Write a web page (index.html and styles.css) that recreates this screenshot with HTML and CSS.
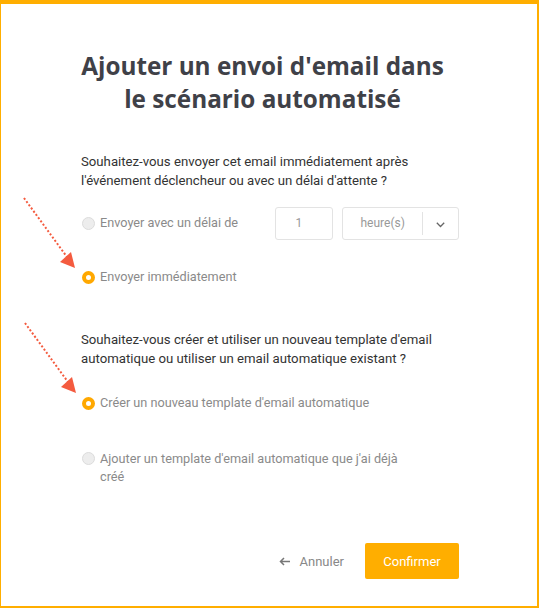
FILE: index.html
```html
<!DOCTYPE html>
<html lang="fr">
<head>
<meta charset="utf-8">
<link rel="stylesheet" href="styles.css">
</head>
<body>
<div class="frame">
  <div class="content">
    <h1 class="title">Ajouter un envoi d'email dans le scénario automatisé</h1>

    <section class="question">
      <p class="q">Souhaitez-vous envoyer cet email immédiatement après l'événement déclencheur ou avec un délai d'attente ?</p>
      <div class="option option-delay">
        <span class="radio"></span>
        <span class="label">Envoyer avec un délai de</span>
        <span class="num-input">1</span>
        <span class="select">
          <span class="select-val">heure(s)</span>
          <span class="select-btn">
            <svg width="9" height="6" viewBox="0 0 9 6"><path d="M0.8 0.8l3.7 3.7 3.7-3.7" fill="none" stroke="#666" stroke-width="1.3"/></svg>
          </span>
        </span>
      </div>
      <div class="option option-now">
        <span class="radio checked"></span>
        <span class="label">Envoyer immédiatement</span>
      </div>
    </section>

    <section class="question q2">
      <p class="q">Souhaitez-vous créer et utiliser un nouveau template d'email automatique ou utiliser un email automatique existant ?</p>
      <div class="option option-new">
        <span class="radio checked"></span>
        <span class="label">Créer un nouveau template d'email automatique</span>
      </div>
      <div class="option option-existing">
        <span class="radio"></span>
        <span class="label">Ajouter un template d'email automatique que j'ai déjà créé</span>
      </div>
    </section>

    <div class="actions">
      <span class="cancel">
        <svg class="arrow-left" width="11" height="9" viewBox="0 0 11 9"><path d="M11 4.5H1.5M5 1L1.5 4.5 5 8" fill="none" stroke="#777" stroke-width="1.5"/></svg>
        Annuler
      </span>
      <span class="confirm">Confirmer</span>
    </div>
  </div>

  <svg class="pointer pointer-1" width="60" height="75" viewBox="0 0 60 75">
    <line x1="3" y1="3" x2="46" y2="62" stroke="#f45b3f" stroke-width="2" stroke-dasharray="2 2"/>
    <polygon points="54,73 39,67 50,57" fill="#f45b3f"/>
  </svg>
  <svg class="pointer pointer-2" width="60" height="75" viewBox="0 0 60 75">
    <line x1="3" y1="3" x2="46" y2="62" stroke="#f45b3f" stroke-width="2" stroke-dasharray="2 2"/>
    <polygon points="54,73 39,67 50,57" fill="#f45b3f"/>
  </svg>
</div>
</body>
</html>
```
FILE: styles.css
```css
html, body {
  margin: 0;
  padding: 0;
  background: #fff;
}
.frame {
  position: relative;
  box-sizing: border-box;
  width: 539px;
  height: 608px;
  border-top: 4px solid #ffae00;
  border-left: 1px solid #ffae00;
  border-right: 2px solid #ffae00;
  border-bottom: 2px solid #ffae00;
  font-family: Roboto, "Liberation Sans", sans-serif;
}
.content {
  width: 378px;
  margin: 0 0 0 80px;
  padding-top: 45px;
}
.title {
  margin: 0 15px 0 0;
  font-family: "Open Sans", sans-serif;
  font-weight: 700;
  font-size: 24.3px;
  line-height: 33px;
  color: #3f4148;
  text-align: center;
}
.question {
  margin-top: 37px;
}
.q {
  margin: 0;
  font-size: 13.2px;
  line-height: 19px;
  color: #333;
  font-weight: 400;
}
.option {
  display: flex;
  align-items: center;
  font-size: 12.7px;
  line-height: 18px;
  color: #8a8a8a;
}
.option-delay {
  margin-top: 16px;
  height: 34px;
}
.option-now {
  margin-top: 28px;
}
.radio {
  flex: none;
  box-sizing: border-box;
  width: 13px;
  height: 13px;
  border-radius: 50%;
  background: #ededed;
  border: 1px solid #dcdcdc;
  margin: 0 5px 0 1px;
}
.radio.checked {
  background: #fff;
  border: 4px solid #ffa800;
}
.option-delay .label {
  width: 176px;
}
.num-input {
  box-sizing: border-box;
  width: 58px;
  height: 33px;
  border: 1px solid #e3e3e3;
  border-radius: 3px;
  display: flex;
  align-items: center;
  padding-left: 19px;
  font-size: 12px;
  color: #999;
}
.select {
  box-sizing: border-box;
  width: 117px;
  height: 33px;
  margin-left: 9px;
  border: 1px solid #e3e3e3;
  border-radius: 3px;
  display: flex;
  align-items: center;
}
.select-val {
  flex: 1;
  text-align: center;
  font-size: 12px;
  color: #999;
}
.select-btn {
  width: 36px;
  height: 23px;
  border-left: 1px solid #e3e3e3;
  display: flex;
  align-items: center;
  justify-content: center;
  padding-top: 3px;
  box-sizing: border-box;
}
.q2 {
  margin-top: 44px;
}
.option-new {
  margin-top: 26px;
}
.option-existing {
  margin-top: 38px;
  align-items: flex-start;
}
.option-existing .label {
  width: 300px;
}
.option-existing .radio {
  margin-top: 2px;
}
.actions {
  display: flex;
  justify-content: flex-end;
  align-items: center;
  margin-top: 57px;
}
.cancel {
  display: flex;
  align-items: center;
  font-size: 13px;
  color: #888;
}
.arrow-left {
  margin-right: 10px;
}
.confirm {
  box-sizing: border-box;
  width: 94px;
  height: 36px;
  margin-left: 21px;
  background: #ffae00;
  border-radius: 2px;
  color: #fff;
  font-size: 13px;
  display: flex;
  align-items: center;
  justify-content: center;
}
.pointer {
  position: absolute;
}
.pointer-1 {
  left: 20px;
  top: 191px;
}
.pointer-2 {
  left: 21px;
  top: 316px;
}
```
